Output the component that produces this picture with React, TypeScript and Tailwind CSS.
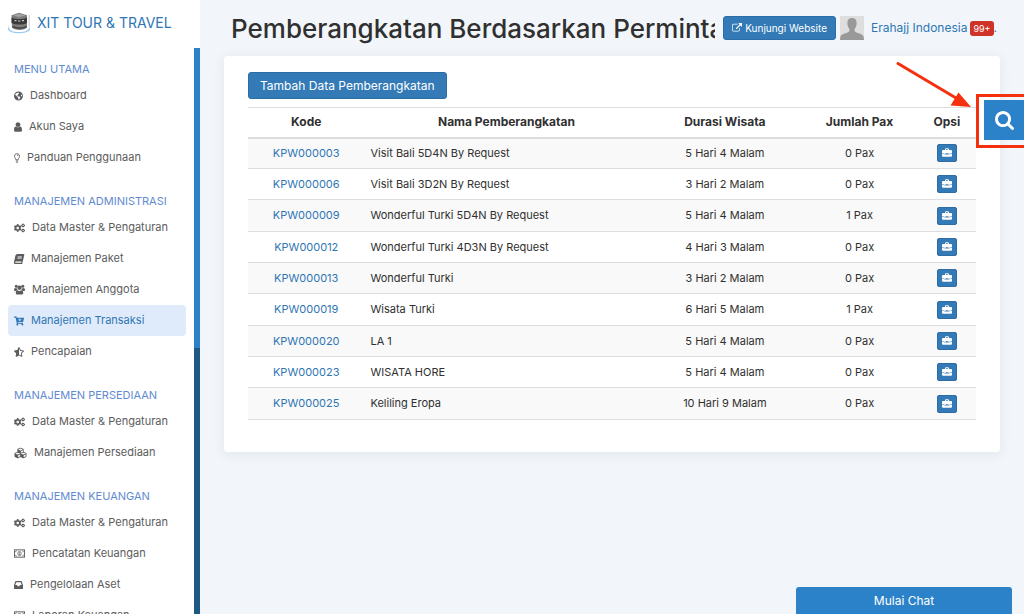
import type { ReactNode } from "react";
import { FaBook, FaCartPlus, FaCogs, FaCubes, FaGlobeAmericas, FaStarHalfAlt } from "react-icons/fa";

type IconProps = { className?: string };

function UserIcon({ className }: IconProps) {
  return (
    <svg viewBox="256 128 1280 1536" fill="currentColor" className={className} aria-hidden="true">
      <path d="M1536 1399q0 109-62.5 187t-150.5 78h-854q-88 0-150.5-78t-62.5-187q0-85 8.5-160.5t31.5-152 58.5-131 94-89 134.5-34.5q131 128 313 128t313-128q76 0 134.5 34.5t94 89 58.5 131 31.5 152 8.5 160.5zm-256-887q0 159-112.5 271.5t-271.5 112.5-271.5-112.5-112.5-271.5 112.5-271.5 271.5-112.5 271.5 112.5 112.5 271.5z" />
    </svg>
  );
}

function UsersIcon({ className }: IconProps) {
  return (
    <svg viewBox="0 0 22 20" fill="currentColor" className={className} aria-hidden="true">
      <circle cx="4.500" cy="3.500" r="3" />
      <circle cx="17.500" cy="3.500" r="3" />
      <circle cx="11" cy="6.500" r="4.300" />
      <path d="M0 11.500C0 8.500 1 7 2.500 7c1 .8 2.500 1 3.600.6C6.200 9.500 6.800 10.600 7.500 11.300 6 11.500 5 12.200 4.300 13H2c-1.200 0-2-.6-2-1.500zM22 11.500C22 8.500 21 7 19.500 7c-1 .8-2.500 1-3.600.6-.1 1.900-.7 3-1.400 3.700 1.500.2 2.500.9 3.200 1.700H20c1.200 0 2-.6 2-1.500z" />
      <path d="M3.500 17C3.500 13.500 5 11.600 7.200 11.600c2.200 1.800 5.400 1.800 7.600 0 2.200 0 3.700 1.900 3.700 5.400 0 1.800-1.200 3-3 3h-9c-1.800 0-3-1.200-3-3z" />
    </svg>
  );
}

function BulbIcon({ className }: IconProps) {
  return (
    <svg viewBox="0 0 12 20" fill="none" stroke="currentColor" strokeWidth="1.7" className={className} aria-hidden="true">
      <path d="M3.800 13.600C3.800 11 1 9.800 1 6.300a5 5 0 0 1 10 0c0 3.500-2.800 4.700-2.800 7.300z" />
      <path d="M3.500 16h5M4.300 18.500h3.400M6.200 4.200c1.200 0 2 .8 2 1.800" />
    </svg>
  );
}

function MoneyIcon({ className }: IconProps) {
  return (
    <svg viewBox="0 0 24 18" fill="none" stroke="currentColor" strokeWidth="2" className={className} aria-hidden="true">
      <rect x="1" y="1" width="22" height="16" />
      <path d="M2 5.500A3.500 3.500 0 0 0 5.500 2M18.500 2A3.500 3.500 0 0 0 22 5.500M22 12.500A3.500 3.500 0 0 0 18.500 16M5.500 16A3.500 3.500 0 0 0 2 12.500" strokeWidth="1.400" />
      <ellipse cx="12" cy="9" rx="3.800" ry="4.800" strokeWidth="1.600" />
      <path d="M10.500 7.500L12.300 6.500V11.500M10.300 11.700h3.600" strokeWidth="1.400" />
    </svg>
  );
}

function InboxIcon({ className }: IconProps) {
  return (
    <svg viewBox="0 0 18 16" fill="currentColor" className={className} aria-hidden="true">
      <path
        fillRule="evenodd"
        d="M3.800 0h10.400c.6 0 1 .3 1.200.9L18 8v6.800c0 .7-.5 1.200-1.200 1.200H1.200C.5 16 0 15.500 0 14.800V8L2.600.9C2.800.3 3.200 0 3.800 0zM4.500 2.300L2.500 8.200h3.700L7.200 10.500h3.600l1-2.300h3.700L13.500 2.300z"
      />
    </svg>
  );
}

function ExternalLinkIcon({ className }: IconProps) {
  return (
    <svg viewBox="0 0 1792 1792" fill="currentColor" className={className} aria-hidden="true">
      <path d="M1408 928v320q0 119-84.5 203.5t-203.5 84.5h-832q-119 0-203.5-84.5t-84.5-203.5v-832q0-119 84.5-203.5t203.5-84.5h704q14 0 23 9t9 23v64q0 14-9 23t-23 9h-704q-66 0-113 47t-47 113v832q0 66 47 113t113 47h832q66 0 113-47t47-113v-320q0-14 9-23t23-9h64q14 0 23 9t9 23zm384-864v512q0 26-19 45t-45 19-45-19l-176-176-652 652q-10 10-23 10t-23-10l-114-114q-10-10-10-23t10-23l652-652-176-176q-19-19-19-45t19-45 45-19h512q26 0 45 19t19 45z" />
    </svg>
  );
}

function BriefcaseIcon({ className }: IconProps) {
  return (
    <svg viewBox="0 0 20 17" fill="currentColor" className={className} aria-hidden="true">
      <path d="M6 3.500V2.300A2.300 2.300 0 0 1 8.300 0h3.400A2.300 2.300 0 0 1 14 2.300v1.200h4a2 2 0 0 1 2 2V10l-7.300 1.300V9.800H7.300v1.500L0 10V5.500a2 2 0 0 1 2-2zm2 0h4V2.300a.5.5 0 0 0-.5-.5h-3a.5.5 0 0 0-.5.5z" />
      <path d="M0 11.200l7.500 1.300h5L20 11.200V15a2 2 0 0 1-2 2H2a2 2 0 0 1-2-2z" />
    </svg>
  );
}

function SearchIcon({ className }: IconProps) {
  return (
    <svg viewBox="64 128 1664 1664" fill="currentColor" className={className} aria-hidden="true">
      <path d="M1216 832q0-185-131.5-316.5t-316.5-131.5-316.5 131.5-131.5 316.5 131.5 316.500 316.500 131.500 316.500-131.500 131.500-316.500zm512 832q0 52-38 90t-90 38q-54 0-90-38l-343-342q-179 124-399 124-143 0-273.500-55.500t-225-150-150-225-55.500-273.500 55.500-273.500 150-225 225-150 273.500-55.500 273.500 55.500 225 150 150 225 55.500 273.500q0 220-124 399l343 343q37 37 37 90z" />
    </svg>
  );
}

function Logo() {
  return (
    <svg viewBox="0 0 24 22" className="h-[22px] w-6 shrink-0" aria-hidden="true">
      <path d="M0 13.500C1 19 5 20 11 20s10-1 11-6.500V17.500C20 22.500 2 22.500 0 17.500z" fill="#9ccbf2" />
      <path d="M20.500 2.500l1.500.5v11l-1.500 1z" fill="#dcdcdc" />
      <path d="M3.500 3.200L11 .8l8 2.400v12C17 18.800 6 18.800 4 15.200z" fill="#7d7d7d" />
      <path d="M5 3.500L11 2l6.500 1.500L11 5z" fill="#a5a5a5" />
      <path d="M3.500 5.500C8 7.500 15 7.500 19 5.500V11C15 13 8 13 3.500 11z" fill="#3a3a3a" />
      <path d="M6.500 8.700h2M10 9h2.500M14 8.700h2" stroke="#c4c4c4" strokeWidth="1.200" />
      <path d="M4.500 14.500c3 2.200 10.500 2.200 14 0" stroke="#4a4a4a" strokeWidth="1.800" fill="none" />
    </svg>
  );
}

type MenuItem = { label: string; icon: ReactNode; active?: boolean };

const cogs = <FaCogs className="h-[10px] w-[11px]" />;
const money = <MoneyIcon className="h-[9px] w-[11px]" />;

const menu: { title: string; items: MenuItem[] }[] = [
  {
    title: "MENU UTAMA",
    items: [
      { label: "Dashboard", icon: <FaGlobeAmericas className="h-[10px] w-[9px]" /> },
      { label: "Akun Saya", icon: <UserIcon className="h-[10px] w-2" /> },
      { label: "Panduan Penggunaan", icon: <BulbIcon className="h-[10px] w-[6px]" /> },
    ],
  },
  {
    title: "MANAJEMEN ADMINISTRASI",
    items: [
      { label: "Data Master & Pengaturan", icon: cogs },
      { label: "Manajemen Paket", icon: <FaBook className="h-[10px] w-[10px] -skew-x-12" /> },
      { label: "Manajemen Anggota", icon: <UsersIcon className="h-[11px] w-[11px]" /> },
      { label: "Manajemen Transaksi", icon: <FaCartPlus className="h-[10px] w-[10px]" />, active: true },
      { label: "Pencapaian", icon: <FaStarHalfAlt className="h-[10px] w-[10px]" /> },
    ],
  },
  {
    title: "MANAJEMEN PERSEDIAAN",
    items: [
      { label: "Data Master & Pengaturan", icon: cogs },
      { label: "Manajemen Persediaan", icon: <FaCubes className="h-[12px] w-[13px]" /> },
    ],
  },
  {
    title: "MANAJEMEN KEUANGAN",
    items: [
      { label: "Data Master & Pengaturan", icon: cogs },
      { label: "Pencatatan Keuangan", icon: money },
      { label: "Pengelolaan Aset", icon: <InboxIcon className="h-[8px] w-[9px]" /> },
      { label: "Laporan Keuangan", icon: money },
    ],
  },
];

const rows = [
  ["KPW000003", "Visit Bali 5D4N By Request", "5 Hari 4 Malam", "0 Pax"],
  ["KPW000006", "Visit Bali 3D2N By Request", "3 Hari 2 Malam", "0 Pax"],
  ["KPW000009", "Wonderful Turki 5D4N By Request", "5 Hari 4 Malam", "1 Pax"],
  ["KPW000012", "Wonderful Turki 4D3N By Request", "4 Hari 3 Malam", "0 Pax"],
  ["KPW000013", "Wonderful Turki", "3 Hari 2 Malam", "0 Pax"],
  ["KPW000019", "Wisata Turki", "6 Hari 5 Malam", "1 Pax"],
  ["KPW000020", "LA 1", "5 Hari 4 Malam", "0 Pax"],
  ["KPW000023", "WISATA HORE", "5 Hari 4 Malam", "0 Pax"],
  ["KPW000025", "Keliling Eropa", "10 Hari 9 Malam", "0 Pax"],
];

function Sidebar() {
  return (
    <aside className="flex w-[200px] shrink-0 flex-col bg-white">
      <a href="#" className="flex h-12 shrink-0 items-center gap-[5px] pb-[2px] pl-2 text-sm whitespace-nowrap text-[#2f76b5]">
        <Logo />
        XIT TOUR &amp; TRAVEL
      </a>
      <div className="flex min-h-0 flex-1">
        <nav className="min-w-0 flex-1 overflow-hidden pt-[10px] pr-2 pl-2">
          {menu.map((section) => (
            <section key={section.title} className="mb-[17px]">
              <h2 className="h-[22px] pl-[6px] text-[11px] leading-[22px] whitespace-nowrap text-[#5f8bd0]">{section.title}</h2>
              <ul>
                {section.items.map((item) => (
                  <li key={item.label}>
                    <a
                      href="#"
                      className={
                        item.active
                          ? "flex h-[31px] items-center gap-[7px] rounded bg-[#dfebfa] pl-[6px] text-[11px] whitespace-nowrap text-[#2f76b5]"
                          : "flex h-[31px] items-center gap-[7px] rounded pl-[6px] text-[11px] whitespace-nowrap text-[#5c5c5c]"
                      }
                    >
                      {item.icon}
                      {item.label}
                    </a>
                  </li>
                ))}
              </ul>
            </section>
          ))}
        </nav>
        <div className="flex w-[6px] flex-col bg-[#1d5983]">
          <div className="h-[53%] bg-[#2b82c9]" />
        </div>
      </div>
    </aside>
  );
}

function Avatar() {
  return (
    <svg viewBox="0 0 24 24" className="h-6 w-6 shrink-0" role="img" aria-label="Erahajj Indonesia">
      <rect width="24" height="24" fill="#dedede" />
      <path d="M12 2c3.200 0 4.800 2.200 4.600 5.500-.1 2.500-1 4.300-2 5.500v2.200c1.500 1.800 8 2.300 8.900 5.300.3 1 .5 2.200.5 3.500H0c0-1.300.2-2.500.5-3.500.9-3 7.400-3.500 8.900-5.300V13c-1-1.200-1.900-3-2-5.500C7.200 4.200 8.800 2 12 2z" fill="#999" />
    </svg>
  );
}

export default function App() {
  return (
    <div className="relative flex h-screen overflow-hidden bg-[#f2f6fa] font-['Inter','Liberation_Sans',sans-serif] text-[#303030]">
      <Sidebar />
      <main className="flex min-w-0 flex-1 flex-col px-6">
        <header className="flex h-14 shrink-0 items-center pl-[7px]">
          <h1 className="min-w-0 flex-1 overflow-hidden text-[26px] font-medium whitespace-nowrap">
            Pemberangkatan Berdasarkan Permintaan
          </h1>
          <a
            href="#"
            className="ml-2 flex h-6 shrink-0 items-center gap-[3px] rounded-[3px] border border-[#2a6da9] bg-[#337ab7] px-2 text-[10px] whitespace-nowrap text-white"
          >
            <ExternalLinkIcon className="h-[10px] w-[10px]" />
            Kunjungi Website
          </a>
          <div className="-mr-5 ml-1 flex w-[180px] shrink-0 items-center text-xs whitespace-nowrap text-[#2f76b5]">
            <Avatar />
            <a href="#" className="ml-[7px]">
              Erahajj Indonesia
            </a>
            <span className="ml-[3px] rounded-[3px] bg-[#cf3228] px-[3px] text-[9px] leading-[15px] text-white">99+</span>.
          </div>
        </header>

        <section className="rounded bg-white px-6 pt-4 pb-8 shadow-[0_2px_12px_rgba(40,70,100,0.09)]">
          <button type="button" className="block h-[27px] rounded-[3px] border border-[#2e6da4] bg-[#337ab7] px-[11px] text-xs text-white">
            Tambah Data Pemberangkatan
          </button>
          <table className="mt-2 w-full table-fixed border-collapse text-[11px]">
            <thead>
              <tr className="h-[30px] border-t border-b-2 border-[#dddddd] text-xs">
                <th className="w-[16%] font-bold">Kode</th>
                <th className="font-bold">Nama Pemberangkatan</th>
                <th className="w-[21%] font-bold">Durasi Wisata</th>
                <th className="w-[16%] font-bold">Jumlah Pax</th>
                <th className="w-[8%] font-bold">Opsi</th>
              </tr>
            </thead>
            <tbody>
              {rows.map(([code, name, duration, pax]) => (
                <tr key={code} className="h-[31px] border-b border-[#dddddd] odd:bg-[#f9f9f9] nth-[3n]:h-8">
                  <td className="text-center">
                    <a href="#" className="text-[#2f76b5]">
                      {code}
                    </a>
                  </td>
                  <td className="pl-[6px]">{name}</td>
                  <td className="text-center">{duration}</td>
                  <td className="text-center">{pax}</td>
                  <td>
                    <button
                      type="button"
                      aria-label={`Opsi ${code}`}
                      className="mx-auto flex h-[18px] w-5 items-center justify-center rounded-[2px] border border-[#2e6da4] bg-[#337ab7] pb-px text-white"
                    >
                      <BriefcaseIcon className="h-[9px] w-[10px]" />
                    </button>
                  </td>
                </tr>
              ))}
            </tbody>
          </table>
        </section>
      </main>

      <button
        type="button"
        aria-label="Cari"
        className="absolute top-[100px] right-0 flex h-10 w-10 items-center justify-center bg-[#2b82c9] text-white"
      >
        <SearchIcon className="h-[19px] w-[19px]" />
      </button>
      <div className="pointer-events-none absolute top-[94px] right-0 h-[54px] w-12 border-3 border-r-0 border-[#f5300f]" />
      <svg viewBox="0 0 76 46" className="pointer-events-none absolute top-[61px] right-[52px] h-[46px] w-[76px]" aria-hidden="true">
        <path d="M2 2.500L60 37" stroke="#f5300f" strokeWidth="3" strokeLinecap="round" />
        <path d="M62.500 31.500L54.500 44.500L75 46z" fill="#f5300f" />
      </svg>
      <button
        type="button"
        className="absolute right-3 bottom-0 h-[27px] w-[216px] rounded-t-[3px] bg-[#2b82c9] text-xs text-white"
      >
        Mulai Chat
      </button>
    </div>
  );
}
